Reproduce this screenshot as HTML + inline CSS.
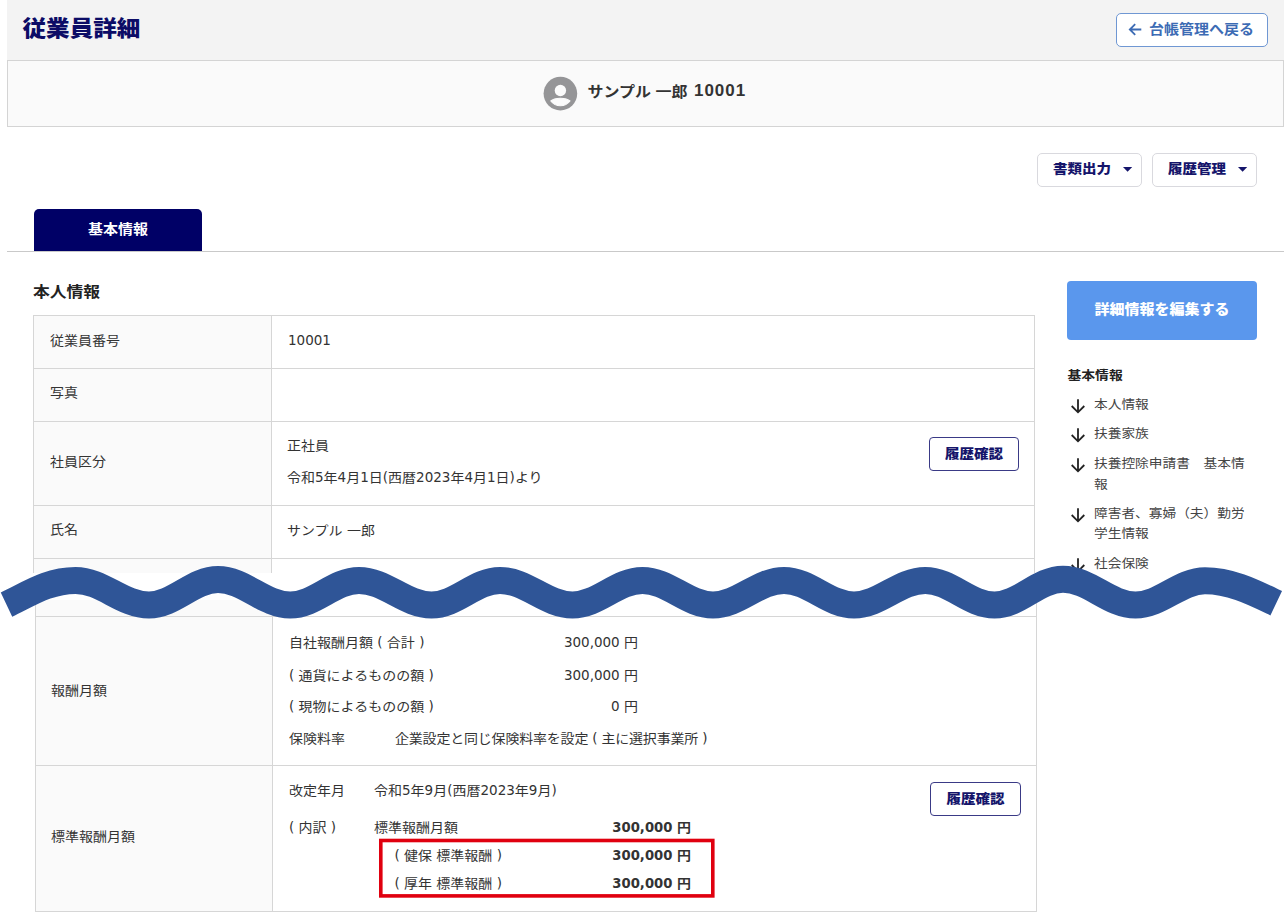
<!DOCTYPE html>
<html lang="ja">
<head>
<meta charset="utf-8">
<title>従業員詳細</title>
<style>
*{box-sizing:border-box;margin:0;padding:0}
html,body{width:1286px;height:923px;overflow:hidden;background:#fff}
body{font-family:"Liberation Sans","Noto Sans CJK JP",sans-serif;color:#333;font-size:14px;font-weight:400;position:relative}
.abs{position:absolute}
.t{position:absolute;white-space:pre;transform:scaleY(.9);line-height:20px;height:20px}
.hdr{left:7px;top:0;width:1277px;height:61px;background:#f3f3f3}
.title{left:22.5px;top:12px;font-size:23.6px;font-weight:900;color:#0c0c66;line-height:34px;height:34px;letter-spacing:0}
.back{left:1116px;top:13px;width:152px;height:34px;border:1px solid #6f97d3;border-radius:5px;background:#fff}
.back .t{left:32px;top:4.5px;font-size:15px;color:#3c6bb4;font-weight:700}
.panel{left:7px;top:60px;width:1277px;height:67px;background:#fafafa;border:1px solid #d4d4d4}
.name{left:587.5px;top:79px;font-size:16px;font-weight:700;color:#333;line-height:26px;height:26px}
.nm{font-family:"Liberation Sans",sans-serif;font-size:17px;font-weight:700;letter-spacing:1px;margin-left:2px;display:inline-block;transform:scaleY(1.11);transform-origin:50% 75%}
.dd{top:153px;width:105px;height:34px;border:1px solid #d9d9de;border-radius:5px;background:#fff}
.dd .t{left:15px;top:4px;font-size:14.5px;font-weight:900;color:#15156b}
.dd i{position:absolute;left:85.5px;top:13px;width:0;height:0;border-left:4.5px solid transparent;border-right:4.5px solid transparent;border-top:4.5px solid #15156b}
.tab{left:34px;top:209px;width:168px;height:42px;background:#000066;border-radius:5px 5px 0 0}
.tab .t{left:0;width:168px;text-align:center;top:10px;font-size:15px;font-weight:700;color:#fff}
.tabline{left:7px;top:251px;width:1277px;height:1px;background:#c9c9c9}
.sec{left:33px;top:281px;font-size:16.8px;font-weight:700;color:#222;line-height:22px;height:22px}
.cell{position:absolute;border:1px solid #d6d6d6;background:#fff}
.lab{background:#fafafa}
.hist{width:91px;height:34px;border:1px solid #3a3a86;border-radius:4px;background:#fff}
.hist .t{left:0;right:0;text-align:center;top:5px;font-size:14.5px;font-weight:900;color:#15156b}
.edit{left:1067px;top:281px;width:190px;height:59px;background:#5a97ed;border-radius:4px}
.edit .t{left:0;width:190px;text-align:center;top:17.5px;font-size:15px;font-weight:900;color:#fff}
.side{font-size:13.7px;color:#444}
.n{font-family:"DejaVu Sans","Liberation Sans",sans-serif;font-size:13.5px;font-weight:400;display:inline-block;white-space:pre;transform:scaleY(1.11);transform-origin:50% 75%;position:relative;top:.6px}
.b .n{font-weight:700}
.b{font-weight:700}
.b .n{font-size:13.2px}
.r{text-align:right}
</style>
</head>
<body>
<div class="abs hdr"></div>
<div class="t title">従業員詳細</div>
<div class="abs back">
<svg class="abs" style="left:11px;top:8px" width="15" height="15" viewBox="0 0 15 15"><path d="M13.300 7.500H2.200M7.200 2.100L1.800 7.500l5.400 5.400" fill="none" stroke="#3c6bb4" stroke-width="1.800"/></svg>
<div class="t">台帳管理へ戻る</div></div>
<div class="abs panel"></div>
<svg class="abs" style="left:543px;top:76px" width="35" height="35" viewBox="-17.4 -17.6 35 35"><circle cx="0" cy="0" r="16.8" fill="#959597"/><circle cx="0" cy="-3.1" r="5.700" fill="#fbfbfb"/><path d="M-9.600 7.400C-7.400 5.200-3.300 4.600 0 4.600S7.400 5.200 9.600 7.400A12.120 12.120 0 0 1 -9.600 7.400Z" fill="#fbfbfb" stroke="#fbfbfb" stroke-width="1.100" stroke-linejoin="round"/></svg>
<div class="t name">サンプル 一郎 <b class="nm">10001</b></div>

<div class="abs dd" style="left:1037px"><div class="t">書類出力</div><svg class="abs" style="left:84.800px;top:12.900px" width="10" height="6" viewBox="0 0 10 6"><path d="M0 0H9.200L4.600 4.800Z" fill="#15156b"/></svg></div>
<div class="abs dd" style="left:1152px"><div class="t">履歴管理</div><svg class="abs" style="left:84.800px;top:12.900px" width="10" height="6" viewBox="0 0 10 6"><path d="M0 0H9.200L4.600 4.800Z" fill="#15156b"/></svg></div>

<div class="abs tab"><div class="t">基本情報</div></div>
<div class="abs tabline"></div>
<div class="t sec">本人情報</div>

<!-- upper table -->
<div class="cell lab" style="left:33px;top:315px;width:239px;height:54px"></div>
<div class="cell" style="left:271px;top:315px;width:764px;height:54px"></div>
<div class="cell lab" style="left:33px;top:368px;width:239px;height:54px"></div>
<div class="cell" style="left:271px;top:368px;width:764px;height:54px"></div>
<div class="cell lab" style="left:33px;top:421px;width:239px;height:85px"></div>
<div class="cell" style="left:271px;top:421px;width:764px;height:85px"></div>
<div class="cell lab" style="left:33px;top:505px;width:239px;height:54px"></div>
<div class="cell" style="left:271px;top:505px;width:764px;height:54px"></div>
<div class="cell lab" style="left:33px;top:558px;width:239px;height:15px;border-bottom:none"></div>
<div class="cell" style="left:271px;top:558px;width:764px;height:15px;border-bottom:none"></div>

<div class="t" style="left:50px;top:330px">従業員番号</div>
<div class="t" style="left:288px;top:330px"><span class="n">10001</span></div>
<div class="t" style="left:50px;top:382px">写真</div>
<div class="t" style="left:50px;top:450.5px">社員区分</div>
<div class="t" style="left:287px;top:434.6px">正社員</div>
<div class="t" style="left:287px;top:467.2px">令和<span class="n">5</span>年<span class="n">4</span>月<span class="n">1</span>日<span class="n">(</span>西暦<span class="n">2023</span>年<span class="n">4</span>月<span class="n">1</span>日<span class="n">)</span>より</div>
<div class="t" style="left:50px;top:519.4px">氏名</div>
<div class="t" style="left:287px;top:520px">サンプル<span class="n"> </span>一郎</div>
<div class="abs hist" style="left:929px;top:437px;width:90px"><div class="t">履歴確認</div></div>

<!-- sidebar -->
<div class="abs edit"><div class="t">詳細情報を編集する</div></div>
<div class="t b" style="left:1067.5px;top:366px;font-size:13.8px;color:#222">基本情報</div>
<svg class="abs" style="left:1070px;top:397.5px" width="16" height="16" viewBox="0 0 16 16"><path d="M8 1.300V14M1.700 8L8 14.300L14.300 8" fill="none" stroke="#222" stroke-width="1.800"/></svg>
<div class="t side" style="left:1094px;top:395.2px">本人情報</div>
<svg class="abs" style="left:1070px;top:427px" width="16" height="16" viewBox="0 0 16 16"><path d="M8 1.300V14M1.700 8L8 14.300L14.300 8" fill="none" stroke="#222" stroke-width="1.800"/></svg>
<div class="t side" style="left:1094px;top:424.3px">扶養家族</div>
<svg class="abs" style="left:1070px;top:457px" width="16" height="16" viewBox="0 0 16 16"><path d="M8 1.300V14M1.700 8L8 14.300L14.300 8" fill="none" stroke="#222" stroke-width="1.800"/></svg>
<div class="t side" style="left:1094px;top:454.0px">扶養控除申請書　基本情</div>
<div class="t side" style="left:1094px;top:474.7px">報</div>
<svg class="abs" style="left:1070px;top:507px" width="16" height="16" viewBox="0 0 16 16"><path d="M8 1.300V14M1.700 8L8 14.300L14.300 8" fill="none" stroke="#222" stroke-width="1.800"/></svg>
<div class="t side" style="left:1094px;top:503.5px">障害者、寡婦（夫）勤労</div>
<div class="t side" style="left:1094px;top:524.2px">学生情報</div>
<svg class="abs" style="left:1070px;top:556.8px" width="16" height="16" viewBox="0 0 16 16"><path d="M8 1.300V14M1.700 8L8 14.300L14.300 8" fill="none" stroke="#222" stroke-width="1.800"/></svg>
<div class="t side" style="left:1094px;top:553.8px">社会保険</div>


<!-- lower table -->
<div class="abs" style="left:0;top:609px;width:1050px;height:314px;background:#fff"></div>
<div class="cell lab" style="left:35px;top:600px;width:238px;height:17px;border-top:none"></div>
<div class="cell" style="left:272px;top:600px;width:765px;height:17px;border-top:none"></div>
<div class="cell lab" style="left:35px;top:616px;width:238px;height:150px"></div>
<div class="cell" style="left:272px;top:616px;width:765px;height:150px"></div>
<div class="cell lab" style="left:35px;top:765px;width:238px;height:147px"></div>
<div class="cell" style="left:272px;top:765px;width:765px;height:147px"></div>

<div class="t" style="left:51px;top:680px">報酬月額</div>
<div class="t" style="left:289px;top:632px">自社報酬月額<span class="n"> ( </span>合計<span class="n"> )</span></div>
<div class="t r" style="left:538px;width:100px;top:632px"><span class="n">300,000 </span>円</div>
<div class="t" style="left:289px;top:665px"><span class="n">( </span>通貨によるものの額<span class="n"> )</span></div>
<div class="t r" style="left:538px;width:100px;top:665px"><span class="n">300,000 </span>円</div>
<div class="t" style="left:289px;top:696px"><span class="n">( </span>現物によるものの額<span class="n"> )</span></div>
<div class="t r" style="left:538px;width:100px;top:696px"><span class="n">0 </span>円</div>
<div class="t" style="left:289px;top:728px">保険料率</div>
<div class="t" style="left:395px;top:728px;letter-spacing:-.2px">企業設定と同じ保険料率を設定<span class="n"> ( </span>主に選択事業所<span class="n"> )</span></div>

<div class="t" style="left:51px;top:826px">標準報酬月額</div>
<div class="t" style="left:289px;top:780px">改定年月</div>
<div class="t" style="left:374px;top:780px">令和<span class="n">5</span>年<span class="n">9</span>月<span class="n">(</span>西暦<span class="n">2023</span>年<span class="n">9</span>月<span class="n">)</span></div>
<div class="t" style="left:289px;top:817px"><span class="n">( </span>内訳<span class="n"> )</span></div>
<div class="t" style="left:374px;top:817px">標準報酬月額</div>
<div class="t r b" style="left:591px;width:100px;top:817px"><span class="n">300,000 </span>円</div>
<div class="t" style="left:394.5px;top:845px"><span class="n">( </span>健保<span class="n"> </span>標準報酬<span class="n"> )</span></div>
<div class="t r b" style="left:591px;width:100px;top:845px"><span class="n">300,000 </span>円</div>
<div class="t" style="left:394.5px;top:873px"><span class="n">( </span>厚年<span class="n"> </span>標準報酬<span class="n"> )</span></div>
<div class="t r b" style="left:591px;width:100px;top:873px"><span class="n">300,000 </span>円</div>
<svg class="abs" style="left:370px;top:830px" width="360" height="80" viewBox="370 830 360 80"><rect x="380.800" y="840.500" width="332" height="55.400" fill="none" stroke="#e0000f" stroke-width="3.600"/></svg>
<div class="abs hist" style="left:930px;top:782px"><div class="t">履歴確認</div></div>

<!-- white band + wave -->
<div class="abs" style="left:0;top:573px;width:1050px;height:27px;background:#fff"></div>
<svg class="abs" style="left:0;top:540px" width="1286" height="100" viewBox="0 540 1286 100"><path d="M6.500 604.600C28 594.500 48 580.4 75.5 580.4C102.3 580.4 122.2 605.0 149 605.0C174.1 605.0 192.9 579.6 218 579.6C244.3 579.6 263.9 605.0 290.2 605.0C315.3 605.0 333.9 580.4 359 580.4C385.4 580.4 405.1 605.0 431.5 605.0C456.4 605.0 475.1 580.4 500 580.4C526.4 580.4 546.1 605.0 572.5 605.0C598.0 605.0 617.0 580.4 642.5 580.4C668.2 580.4 687.3 605.0 713 605.0C738.9 605.0 758.1 580.4 784 580.4C809.5 580.4 828.5 605.0 854 605.0C880.0 605.0 899.3 580.4 925.3 580.4C950.5 580.4 969.3 605.0 994.5 605.0C1019.4 605.0 1038.1 579.2 1063 579.2C1089.4 579.2 1109.1 605.0 1135.5 605.0C1160.8 605.0 1179.7 580.8 1205 580.8C1231.0 580.8 1254.0 592.600 1276.200 603.200" fill="none" stroke="#2f5597" stroke-width="27" stroke-linecap="butt" stroke-linejoin="round"/></svg>
</body>
</html>
